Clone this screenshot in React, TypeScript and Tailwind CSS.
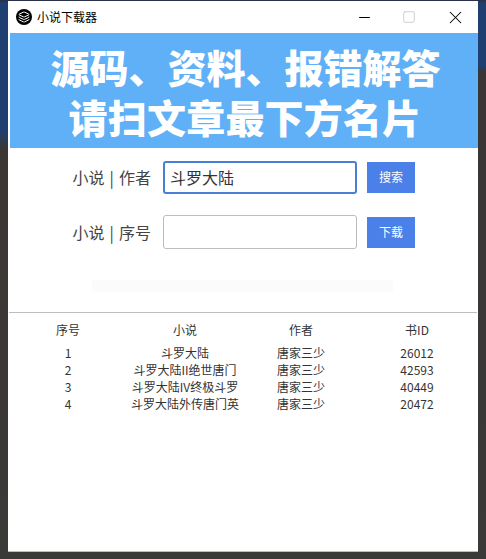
import { Layers, Minus, Square, X } from 'lucide-react';

const rows = [
  { no: 1, name: '斗罗大陆', author: '唐家三少', id: 26012 },
  { no: 2, name: '斗罗大陆II绝世唐门', author: '唐家三少', id: 42593 },
  { no: 3, name: '斗罗大陆IV终极斗罗', author: '唐家三少', id: 40449 },
  { no: 4, name: '斗罗大陆外传唐门英', author: '唐家三少', id: 20472 },
];

export default function App() {
  return (
    <div className="w-[486px] h-[559px] overflow-hidden flex pl-2 bg-[linear-gradient(180deg,#2a2f3f_0px,#1f3f70_3px,#1f3f70_130px,#3d3733_150px,#3a3a38_559px)] font-['Noto_Sans_CJK_SC','Liberation_Sans',sans-serif]">
      <div className="w-[470px] h-[551px] mt-px bg-white flex flex-col border-b border-[#bdbdbd] shrink-0">
        {/* Title bar */}
        <div className="h-8 flex items-center pl-2 shrink-0">
          <div className="w-4 h-4 rounded-full bg-black flex items-center justify-center">
            <Layers className="w-3 h-3 text-white" strokeWidth={2} />
          </div>
          <span className="ml-[5px] text-xs text-black">小说下载器</span>
          <div className="ml-auto flex items-center">
            <Minus className="w-[17px] h-[17px] text-black mr-[29px]" strokeWidth={1.4} />
            <Square className="w-[14px] h-[14px] text-[#c8c8c8] mr-[29px]" strokeWidth={1.5} />
            <X className="w-[21px] h-[21px] text-black mr-3" strokeWidth={1.2} />
          </div>
        </div>

        {/* Banner */}
        <div className="ml-0.5 h-[115px] shrink-0 bg-[#5fb0f7] flex flex-col items-center justify-center text-white text-[39px] leading-[50px] font-black">
          <div className="pl-[3px]">源码、资料、报错解答</div>
          <div className="pl-[2px] tracking-[0.2px]">请扫文章最下方名片</div>
        </div>

        {/* Form */}
        <div className="mt-[13px] flex items-center h-[33px]">
          <span className="w-[143px] pb-px text-right text-base text-[#444] [word-spacing:1.5px]">小说 | 作者</span>
          <input
            readOnly
            value="斗罗大陆"
            className="ml-3 w-[194px] h-[33px] pl-[5px] pb-px border-2 border-[#4a7fd6] rounded-[3px] text-base text-[#333] outline-none"
          />
          <button className="ml-[10px] w-12 h-[31px] pb-px bg-[#4a80e8] text-white text-xs">搜索</button>
        </div>
        <div className="mt-[21px] flex items-center h-[34px]">
          <span className="w-[143px] pb-px text-right text-base text-[#444] [word-spacing:1.5px]">小说 | 序号</span>
          <input
            readOnly
            className="ml-3 w-[194px] h-[34px] px-[6px] border border-[#bdbdbd] rounded-[3px] text-base outline-none"
          />
          <button className="ml-[10px] w-12 h-[31px] pb-px bg-[#4a80e8] text-white text-xs">下载</button>
        </div>

        {/* Progress placeholder */}
        <div className="mt-[31px] ml-[84px] w-[301px] h-3 bg-[#fbfbfb]" />

        {/* Results */}
        <div className="mt-5 ml-px mr-px border-t border-[#bdbdbd] pt-[8px] text-xs text-[#333]">
          <div className="grid grid-cols-[118px_116px_116px_116px] text-center leading-[17px] mb-[6px]">
            <span>序号</span>
            <span>小说</span>
            <span>作者</span>
            <span>书ID</span>
          </div>
          {rows.map((row) => (
            <div key={row.no} className="grid grid-cols-[118px_116px_116px_116px] text-center leading-[17px]">
              <span>{row.no}</span>
              <span className="whitespace-nowrap">{row.name}</span>
              <span>{row.author}</span>
              <span>{row.id}</span>
            </div>
          ))}
        </div>
      </div>
      {/* Desktop behind the window, right side */}
      <div className="flex-1 bg-[linear-gradient(180deg,#2a2f3f_0px,#1f3f70_3px,#1f3f70_66px,#3b3535_72px,#3a3a38_559px)]" />
    </div>
  );
}
